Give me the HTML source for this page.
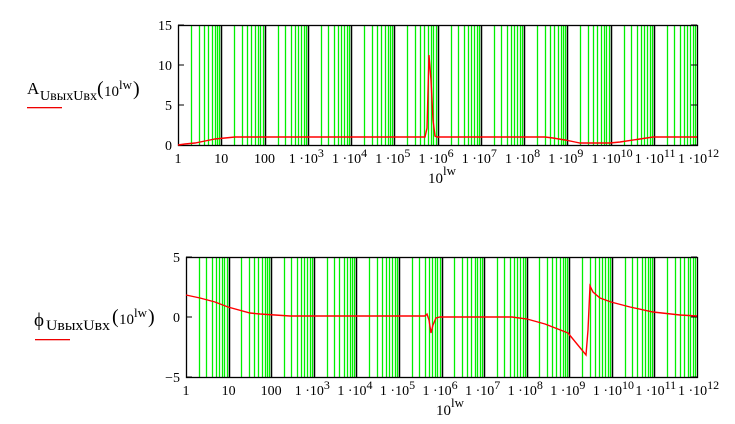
<!DOCTYPE html>
<html><head><meta charset="utf-8"><style>
html,body{margin:0;padding:0;background:#fff;width:735px;height:424px;overflow:hidden}
svg{display:block}
text{font-family:"Liberation Serif",serif;fill:#000}
</style></head><body>
<svg id="s" width="735" height="424" xmlns="http://www.w3.org/2000/svg">
<g id="g"></g>
<text x="27" y="94" font-size="17">A</text>
<text x="40" y="100" font-size="14" textLength="57" lengthAdjust="spacingAndGlyphs">UвыхUвх</text>
<text x="97" y="95" font-size="20">(</text>
<text x="104" y="96" font-size="15">10</text>
<text x="119" y="89" font-size="13">lw</text>
<text x="133" y="95" font-size="20">)</text>
<rect x="27" y="107" width="35" height="1.3" fill="#e00"/>
<text x="34" y="326" font-size="19" font-family="DejaVu Serif, serif">ϕ</text>
<text x="46" y="330" font-size="15" textLength="64" lengthAdjust="spacingAndGlyphs">UвыхUвх</text>
<text x="112" y="323" font-size="20">(</text>
<text x="119" y="324" font-size="15">10</text>
<text x="134" y="317" font-size="13">lw</text>
<text x="148" y="323" font-size="20">)</text>
<rect x="35" y="339" width="35" height="1.3" fill="#e00"/>
</svg>
<script>
var g=document.getElementById('g'),h='';
function plot(L,R,T,B,yticks,curve){
  var dw=(R-L)/12;
  for(var d=0;d<12;d++)for(var k=2;k<=9;k++){var x=Math.round(L+dw*(d+Math.log10(k)))+0.5;
    h+='<line x1="'+x+'" y1="'+T+'" x2="'+x+'" y2="'+B+'" stroke="#00f000" stroke-width="1.3"/>';}
  for(var d=1;d<12;d++){var x=Math.round(L+dw*d)+0.5;
    h+='<line x1="'+x+'" y1="'+T+'" x2="'+x+'" y2="'+B+'" stroke="#000" stroke-width="1.5"/>';}
  h+='<rect x="'+(L+0.5)+'" y="'+(T+0.5)+'" width="'+(R-L)+'" height="'+(B-T)+'" fill="none" stroke="#000" stroke-width="1.3"/>';
  yticks.forEach(function(t){h+='<line x1="'+L+'" y1="'+t[1]+'" x2="'+(L+6)+'" y2="'+t[1]+'" stroke="#000"/><line x1="'+(R-6)+'" y1="'+t[1]+'" x2="'+R+'" y2="'+t[1]+'" stroke="#000"/><text x="'+(L-6)+'" y="'+(t[1]+5)+'" font-size="14" text-anchor="end">'+t[0]+'</text>';});
  h+='<polyline points="'+curve+'" fill="none" stroke="#f00" stroke-width="1.4"/>';
  var labs=['1','10','100'];
  for(var d=0;d<=12;d++){var x=L+dw*d;
    if(d<3)h+='<text x="'+x+'" y="'+(B+18)+'" font-size="14" text-anchor="middle">'+labs[d]+'</text>';
    else h+='<text x="'+(x-19)+'" y="'+(B+18)+'" font-size="14">1 ·10<tspan dy="-6" font-size="12">'+d+'</tspan></text>';}
  h+='<text x="'+(L+250)+'" y="'+(B+38)+'" font-size="15">10<tspan dy="-8" font-size="13">lw</tspan></text>';
}
var c1='178,145 185,144 195,143 205,141 215,139 225,138 235,137 425,137 427,128 429,55 431,80 433,120 435,136 437,137 545,137 553,138 565,140 575,142 580,143 610,143 620,142 640,139 653,137 697,137';
plot(178,697,25,145,[['15',25],['10',65],['5',105],['0',145]],c1);
var c2='186,295 200,298 215,302 228,307 250,313 260,314 275,315 290,316 425,316 427,314 429,320 431,333 433,325 436,318 440,317 512,317 527,319 545,324 568,333 586,355 588,330 590,286 593,292 600,298 611,302 630,307 653,312 680,315 697,316';
plot(186,697,257,377,[['5',257],['0',317],['−5',377]],c2);
g.innerHTML=h;
</script>
</body></html>
